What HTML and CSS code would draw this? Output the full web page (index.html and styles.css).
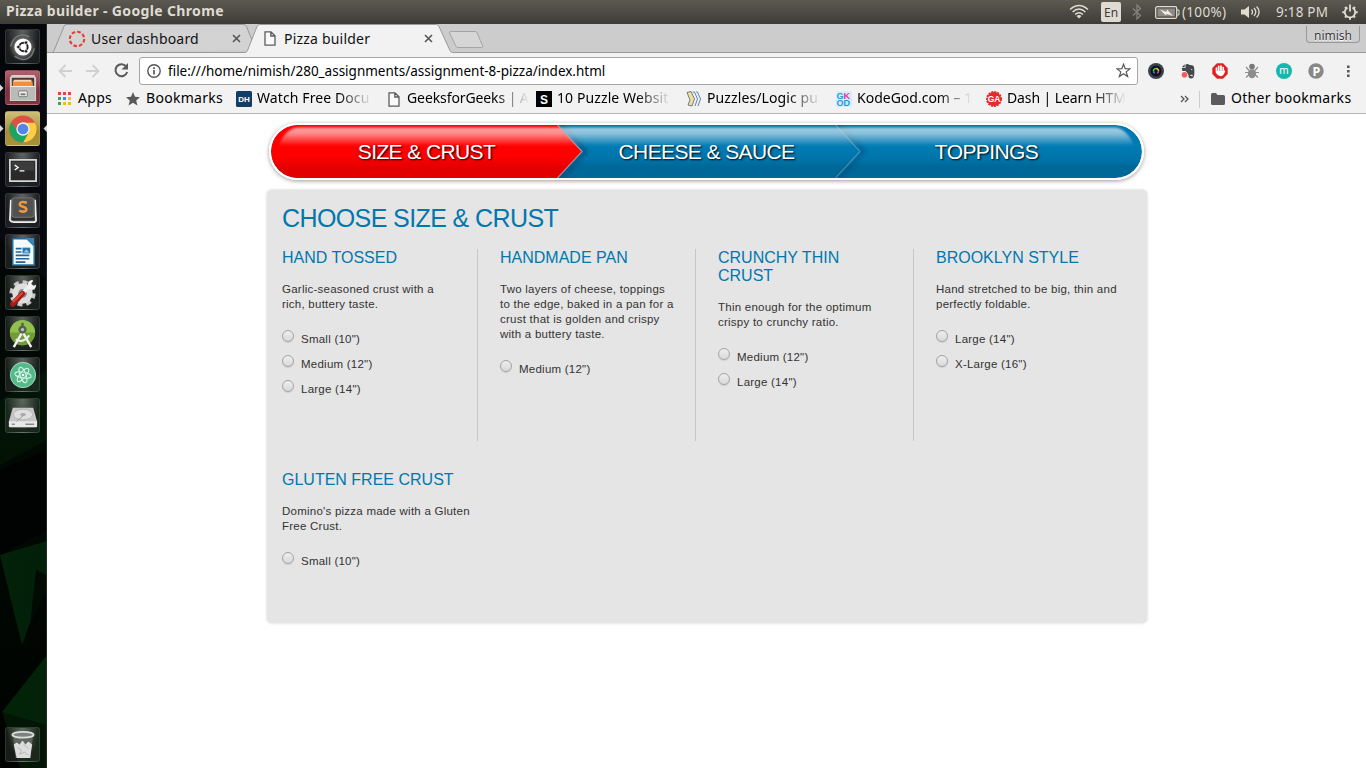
FILE: index.html
```html
<!DOCTYPE html>
<html lang="en">
<head>
<meta charset="utf-8">
<title>Pizza builder</title>
<link rel="stylesheet" href="styles.css">
</head>
<body>
<header class="menubar">
  <span class="window-title">Pizza builder - Google Chrome</span>
  <div class="indicators">
    <svg class="ind-wifi" width="20" height="16" viewBox="0 0 20 16" fill="none" stroke="#dfdbd2" stroke-width="1.4"><path d="M1 5.5Q10-2.500 19 5.500M3.600 8Q10 2 16.400 8M6 10.500Q10 6.800 14 10.500" /><path d="M7.500 12Q10 9.800 12.500 12L10 14.600z" fill="#dfdbd2" stroke="none"/></svg>
    <span class="lang">En</span>
    <svg class="ind-bt" width="10" height="16" viewBox="0 0 10 16" fill="none" stroke="#85827b" stroke-width="1.300"><path d="M1 4.500 8.500 11.500 5 15V1L8.500 4.500 1 11.500"/></svg>
    <svg class="ind-bat" width="25" height="13" viewBox="0 0 25 13"><rect x=".7" y=".7" width="21" height="11.600" rx="1.500" fill="none" stroke="#dfdbd2" stroke-width="1.300"/><rect x="2.500" y="2.500" width="17.400" height="8" fill="#8f8c85"/><path d="M22 4h2v5h-2" fill="none" stroke="#dfdbd2"/><path d="M5 3.500 11.500 6 12 3.500 18 10 11.500 7.700 11 9.500z" fill="#f3f0e8"/></svg>
    <span class="bat-text">(100%)</span>
    <svg class="ind-vol" width="21" height="16" viewBox="0 0 21 16"><path d="M1 5.500h3.500L9 2v12l-4.500-3.500H1z" fill="#dfdbd2"/><path d="M11.500 5.500q2 2.500 0 5M14 4q3.500 4 0 8M16.600 2.500q5 5.500 0 11" fill="none" stroke="#dfdbd2" stroke-width="1.300"/></svg>
    <span class="clock">9:18 PM</span>
    <svg class="ind-gear" width="16" height="16" viewBox="0 0 16 16" fill="none" stroke="#dfdbd2"><path d="M5.500 3.600A5.200 5.200 0 1 0 10.500 3.600" stroke-width="1.800"/><path d="M8 .5v7" stroke-width="1.800"/><path d="M3 3 4.500 4.500M13 3l-1.500 1.500M.3 8.300H3M13 8.300h2.700M3 13.500l1.500-1.500M13 13.500 11.500 12M8 13v2.700" stroke-width="2"/></svg>
  </div>
</header>

<div class="desktop">
<nav class="launcher">
  <svg class="wallpaper" width="47" height="744" viewBox="0 24 47 744">
    <defs><linearGradient id="wg" x2="0" y2="1"><stop offset="0" stop-color="#05060b"/><stop offset=".25" stop-color="#020606"/><stop offset=".5" stop-color="#020a05"/><stop offset="1" stop-color="#000300"/></linearGradient><linearGradient id="wf" x2="1" y2=".3"><stop offset="0" stop-color="#032208"/><stop offset="1" stop-color="#02200a"/></linearGradient></defs>
    <path d="M0 24h47v744H0z" fill="url(#wg)"/>
    <path d="M0 78 47 90V280L0 240z" fill="#0b0c16" opacity=".6"/>
    <path d="M0 400 47 370V440L0 465z" fill="#031807" opacity=".7"/><path d="M0 470 47 450V530L0 555z" fill="#000301"/>
    <path d="M0 555 47 541V574L22 645z" fill="url(#wf)"/><path d="M36 570 47 575V590L30 625z" fill="#010b03"/><path d="M2 712 47 655V745z" fill="#032309"/><path d="M2 712 20 768H47V725z" fill="#031605"/>
    <path d="M46.500 24V768" stroke="#283329" opacity=".8"/>
    <path d="M0 84.500l3.500 3.500L0 91.500zM0 125l3.500 3.500L0 132zM47 125l-3.500 3.500L47 132z" fill="#d8d8d8"/>
  </svg>
  <div class="tile"><svg viewBox="0 0 34 34"><defs><radialGradient id="glow"><stop offset=".4" stop-color="#8a8a8a"/><stop offset="1" stop-color="#444" stop-opacity="0"/></radialGradient></defs><circle cx="17" cy="18" r="15" fill="url(#glow)"/><path d="M5 17C7 5 17 3 24 7M29 19C27 31 17 33 9 27" fill="none" stroke="#777" stroke-width="1.500"/><circle cx="17.500" cy="17.500" r="8.800" fill="#fff"/><circle cx="18" cy="17.500" r="4.300" fill="none" stroke="#222" stroke-width="2"/><g fill="#222" stroke="#fff" stroke-width=".7"><circle cx="12.700" cy="17.500" r="1.800"/><circle cx="20.600" cy="13" r="1.800"/><circle cx="20.600" cy="22" r="1.800"/></g></svg></div>
  <div class="tile files"><svg viewBox="0 0 34 34"><path d="M6 4h23l2 3v24H4V7z" fill="#d4d2ce"/><path d="M6 7h23v9H6z" fill="#4b3530"/><path d="M7 10h20l1 6H7z" fill="#ee8f46"/><path d="M8 9h18v2H8z" fill="#f4d5b4"/><path d="M5 16h25v14H5z" fill="#bcbab6"/><path d="M5 16h25" stroke="#f4f4f4"/><rect x="13" y="20.500" width="9" height="6" rx="1.500" fill="#efefef" stroke="#777"/><path d="M15 24h5" stroke="#777" stroke-width="2"/></svg></div>
  <div class="tile chrome"><svg viewBox="0 0 34 34"><circle cx="17.500" cy="17.500" r="14" fill="#dd5144"/><path d="M17.500 11h12.400A14 14 0 0 1 17.500 31.500l5.800-10.500z" fill="#ffcd42"/><path d="M5.400 10.500A14 14 0 0 0 17.500 31.500l5-8.500-9-1z" fill="#1da462"/><circle cx="17.500" cy="17.500" r="6.900" fill="#f2f2f2"/><circle cx="17.500" cy="17.500" r="5.500" fill="#5287e8"/></svg></div>
  <div class="tile"><svg viewBox="0 0 34 34"><path d="M4 7h27v22H4z" fill="#292929" stroke="#d5d5d5" stroke-width="1.800"/><path d="M6 9h23v9H6z" fill="#3c3c3c"/><path d="M9 12.500 12.500 15 9 17.500M14 18.500h5" fill="none" stroke="#fff" stroke-width="1.300"/></svg></div>
  <div class="tile"><svg viewBox="0 0 34 34"><path d="M5 6 4 27q1 2 4 2h20q3 0 3-2L30 6" fill="#555" stroke="#eee" stroke-width="1.800"/><path d="M6 24h23v3H6z" fill="#2d2d2d"/><rect x="6" y="4" width="23" height="20" rx="3" fill="#515151" stroke="#777"/><path d="M21.500 9q-7-2-7.300 1.500c0 3.300 7 2 6.800 5.500-.2 2.800-4.700 2.600-7.400 1" fill="none" stroke="#ef993c" stroke-width="2.600"/></svg></div>
  <div class="tile"><svg viewBox="0 0 34 34"><path d="M7 4h15l7 7v20H7z" fill="#f6f9fb" stroke="#2371a4" stroke-width="1.500"/><path d="M20 3h9v9z" fill="#3c82b4"/><path d="M10 14h6M10 17.500h6M10 21h14M10 24.500h14M10 28h10" stroke="#1f679b" stroke-width="1.700"/><path d="M17 13h8v6h-8z" fill="#2a77ad"/><path d="m18 18 3-3 3 3" fill="#9cd"/></svg></div>
  <div class="tile"><svg viewBox="0 0 34 34"><circle cx="17" cy="18" r="11.500" fill="none" stroke="#c9c9c9" stroke-width="4" stroke-dasharray="5 4"/><circle cx="17" cy="18" r="10.500" fill="#dedede"/><circle cx="17" cy="18" r="4.500" fill="#888"/><path d="M17 18 25 9" stroke="#eee" stroke-width="4"/><path d="M23 6q4-3 5-1l-2 3 2 2 3-1q0 5-5 5t-3-8" fill="#f1f1f1"/><path d="M17 18 7 29" stroke="#9f211b" stroke-width="5.500" stroke-linecap="round"/><path d="M17 17 7 27" stroke="#dd453b" stroke-width="2.500"/></svg></div>
  <div class="tile"><svg viewBox="0 0 34 34"><circle cx="17" cy="16" r="13" fill="#8fc14b"/><path d="M4 16a13 13 0 0 0 26 0z" fill="#719c38"/><circle cx="17" cy="13" r="3" fill="#bdc6b5" stroke="#59605a" stroke-width="2.500"/><path d="M16 17 8 31M18 17l8 14" stroke="#f1f1f1" stroke-width="2.500"/><path d="M10 23q7 5 14-4" fill="none" stroke="#eee" stroke-width="2"/><path d="M17 6v4" stroke="#59605a" stroke-width="2.500"/></svg></div>
  <div class="tile"><svg viewBox="0 0 34 34"><circle cx="17.500" cy="17.500" r="13" fill="#55b889" stroke="#a0dec0"/><g fill="none" stroke="#d8f5e8" stroke-width="1"><ellipse cx="17.500" cy="17.500" rx="8.500" ry="3" transform="rotate(10 17.500 17.500)"/><ellipse cx="17.500" cy="17.500" rx="8.500" ry="3" transform="rotate(70 17.500 17.500)"/><ellipse cx="17.500" cy="17.500" rx="8.500" ry="3" transform="rotate(130 17.500 17.500)"/></g><circle cx="17.500" cy="17.500" r="1.300" fill="#fff"/></svg></div>
  <div class="tile"><svg viewBox="0 0 34 34"><path d="M7 9h21l4 14v4q0 2-2 2H5q-2 0-2-2v-4z" fill="#c6c6c6"/><path d="M3 23h29v6H3z" fill="#e8e8e8"/><ellipse cx="17.500" cy="16" rx="10" ry="5.500" fill="#dedede" stroke="#b5b5b5"/><ellipse cx="17.500" cy="16" rx="3" ry="1.600" fill="#aaa"/><path d="M6 26h3M20 26h9" stroke="#888" stroke-width="1.500"/><path d="M18 17 11 23" stroke="#999"/></svg></div>
  <div class="tile trash"><svg viewBox="0 0 34 34"><path d="M7 7 10 31h15L28 7z" fill="#6c756d" opacity=".7"/><path d="m8 17 3-2 3 2 3-4 3 4 3-3 4 3-1 6-1 8H11z" fill="#dcdcdc"/><path d="m12 20 4 3-2 4 5-2 4 3M18 17l5 4" fill="none" stroke="#b5b5b5"/><ellipse cx="17.500" cy="7" rx="11" ry="3" fill="#7a837c" stroke="#ddd" stroke-width="1.800"/></svg></div>
</nav>

<main class="browser">
  <div class="tabstrip">
    <svg class="tab-shapes" width="1319" height="29" viewBox="0 0 1319 29">
      <path d="M0 28.500H5q1 0 2-2L17 2.500q.8-2 2-2H197q1.500 0 2.500 2L209 26" fill="#d3d3d3" stroke="#989898"/>
      <path d="M0 28.500H198q1.500 0 2.500-2L210 2.500q1-2 2.500-2H389.500q1.500 0 2.500 2l11 24q1 2 2.500 2H1319V30H0z" fill="#f2f2f2"/>
      <path d="M0 28.500H198q1.500 0 2.500-2L210 2.500q1-2 2.500-2H389.500q1.500 0 2.500 2l11 24q1 2 2.500 2H1319" fill="none" stroke="#999"/>
      <path d="M404 7.500h24q1.500 0 2 1.200l5.500 13q.7 1.800-1 1.800H411q-1.500 0-2.200-1.500L402.500 9q-.5-1.500 1.500-1.500z" fill="#d6d6d6" stroke="#a5a5a5"/>
    </svg>
    <div class="tab tab-one"><svg width="18" height="18" viewBox="0 0 18 18"><circle cx="9" cy="9" r="7.200" fill="none" stroke="#e53e35" stroke-width="2.100" stroke-dasharray="3.600 2.050"/></svg><span>User dashboard</span><svg class="close" width="9" height="9" viewBox="0 0 9 9"><path d="m1 1 7 7M8 1 1 8" stroke="#565656" stroke-width="1.600"/></svg></div>
    <div class="tab tab-two"><svg width="12" height="15" viewBox="0 0 12 15"><path d="M1 .8h6l4 4v9.400H1zM6.800 1v4H11" fill="#fafafa" stroke="#5c5c5c" stroke-width="1.300"/></svg><span>Pizza builder</span><svg class="close" width="9" height="9" viewBox="0 0 9 9"><path d="m1 1 7 7M8 1 1 8" stroke="#565656" stroke-width="1.600"/></svg></div>
    <span class="profile">nimish</span>
  </div>

  <div class="toolbar">
    <svg class="arrow" width="14" height="14" viewBox="0 0 14 14" fill="none" stroke="#d0d0d0" stroke-width="1.800"><path d="M14 7H1.500M7.500 1 1.500 7l6 6"/></svg>
    <svg class="arrow" width="14" height="14" viewBox="0 0 14 14" fill="none" stroke="#d0d0d0" stroke-width="1.800"><path d="M0 7h12.500M6.500 1l6 6-6 6"/></svg>
    <svg class="reload" width="15" height="15" viewBox="0 0 15 15"><path d="M12.200 3.400A6 6 0 1 0 13.200 9" fill="none" stroke="#5a5a5a" stroke-width="2"/><path d="M14 0v6.500H7.500z" fill="#5a5a5a"/></svg>
    <div class="omnibox">
      <svg width="14" height="14" viewBox="0 0 14 14"><circle cx="7" cy="7" r="6.200" fill="none" stroke="#555" stroke-width="1.400"/><path d="M7 6v4.500M7 3.300v1.600" stroke="#555" stroke-width="1.700"/></svg>
      <span class="url">file:///home/nimish/280_assignments/assignment-8-pizza/index.html</span>
      <svg class="star" width="15" height="15" viewBox="0 0 15 15"><path d="m7.500 1.300 1.700 4.400 4.800.2-3.800 3 1.400 4.600-4.100-2.700-4.100 2.700 1.400-4.600-3.800-3 4.800-.2z" fill="none" stroke="#555" stroke-width="1.200"/></svg>
    </div>
    <div class="extensions">
      <svg viewBox="0 0 16 16"><circle cx="8" cy="8" r="8" fill="#3e434b"/><circle cx="8" cy="8" r="5.500" fill="#10131a"/><path d="M5.500 8A2.500 2.500 0 0 1 8 5.500" stroke="#37c94e" stroke-width="1.600" fill="none"/><path d="M8 5.500A2.500 2.500 0 0 1 10.500 8" stroke="#d9cf2a" stroke-width="1.600" fill="none"/><path d="M10.500 8A2.500 2.500 0 0 1 9 10.300" stroke="#d93bb5" stroke-width="1.600" fill="none"/><path d="M6.700 10.200A2.500 2.500 0 0 1 5.500 8" stroke="#2b7fe0" stroke-width="1.600" fill="none"/></svg>
      <svg viewBox="0 0 16 16"><path d="M5.500 1.500Q8 .5 9.500 2q4-.3 4.500 2 .7 4 .2 8-.4 3.500-3.200 3.500-3 0-2.500-3.500L7 9.500 5.500 8H2.500Q1.500 6.500 2 5h3.500z" fill="#45494c"/><path d="M1.800 4.200 4.700 1.300v2.900z" fill="#45494c"/><path d="M10.300 12.500q2-.8 2 .8M11.200 6.500h1" stroke="#eee" stroke-width="1.200" fill="none"/><circle cx="4.500" cy="11.700" r="2.800" fill="#f45b5b"/></svg>
      <svg viewBox="0 0 16 16"><path d="M5 .3h6L15.700 5v6L11 15.700H5L.3 11V5z" fill="#e02322"/><path d="M4.500 9V5M6.700 8V3.300M9 8V3M11.200 9V4.500" stroke="#fff" stroke-width="1.700" stroke-linecap="round"/><path d="M4 8h8l1-1q.8 1-1 4-1 2.300-3.500 2.300T4 10z" fill="#fff"/></svg>
      <svg viewBox="0 0 16 16"><path d="M2 4 5 7.500M14 4 11 7.500M1 9.500h14M2 14.500 5 11.500M14 14.500 11 11.500" stroke="#8d8d8d" stroke-width="1.200"/><ellipse cx="8" cy="10.500" rx="4" ry="4.800" fill="#8d8d8d"/><path d="M4.500 6h7" stroke="#ccc"/><circle cx="8" cy="3.500" r="2.800" fill="#777"/></svg>
      <svg viewBox="0 0 16 16"><circle cx="8" cy="8" r="8" fill="#14b8ae"/><text x="8" y="11" text-anchor="middle" class="ext-m">m</text></svg>
      <svg viewBox="0 0 16 16"><circle cx="8" cy="8" r="7.700" fill="#888"/><text x="8.500" y="12.500" text-anchor="middle" class="ext-p">P</text></svg>
      <svg viewBox="0 0 16 16"><path d="M7 2.500h2.600V5H7zM7 7h2.600v2.500H7zM7 11.500h2.600V14H7z" fill="#595959"/></svg>
    </div>
  </div>

  <div class="bookmarks">
    <div class="bm b-apps"><svg width="14" height="14" viewBox="0 0 14 14"><path d="M0 0h3v3H0zM5 0h3v3H5zM10 0h3v3h-3z" fill="#ea4335"/><path d="M0 5h3v3H0zM0 10h3v3H0z" fill="#34a853"/><path d="M5 5h3v3H5z" fill="#4285f4"/><path d="M10 5h3v3h-3zM5 10h3v3H5zM10 10h3v3h-3z" fill="#fbbc05"/></svg><span>Apps</span></div>
    <div class="bm b-star"><svg width="14" height="14" viewBox="0 0 14 14"><path d="m7 0 2 4.800 5 .4-3.800 3.300 1.200 5L7 10.800 2.600 13.500l1.200-5L0 5.200l5-.4z" fill="#595959"/></svg><span>Bookmarks</span></div>
    <div class="bm b-watch"><svg width="16" height="16" viewBox="0 0 16 16"><rect width="16" height="16" rx="1.500" fill="#123d66"/><text x="8" y="11" text-anchor="middle" class="ico-dh">DH</text></svg><span class="fade">Watch Free Docu</span></div>
    <div class="bm b-geeks"><svg width="12" height="15" viewBox="0 0 12 15"><path d="M1 .8h6l4 4v9.400H1zM6.800 1v4H11" fill="#fafafa" stroke="#5c5c5c" stroke-width="1.300"/></svg><span class="fade">GeeksforGeeks | A</span></div>
    <div class="bm b-ten"><svg width="16" height="16" viewBox="0 0 16 16"><path d="M0 0h16v16H0z"/><text x="8" y="12.500" text-anchor="middle" class="ico-s">S</text></svg><span class="fade">10 Puzzle Websit</span></div>
    <div class="bm b-puz"><svg width="16" height="16" viewBox="0 0 16 16"><path d="m1 1.500 4-1L8.500 8 6 15l-4-1 2-5z" fill="#efe0a2" stroke="#54606b" stroke-width=".8"/><path d="M6.500 1h2l3 7-2.500 7M10 1h1.500l3 7-2.500 7" fill="none" stroke="#5b86b5"/></svg><span class="fade">Puzzles/Logic pu</span></div>
    <div class="bm b-kode"><svg width="16" height="16" viewBox="0 0 16 16"><rect width="16" height="16" rx="2" fill="#d6edf7"/><text x=".5" y="7.500" class="ico-k">G<tspan fill="#e33594">K</tspan></text><text x=".5" y="15" class="ico-k">OD</text></svg><span class="fade">KodeGod.com – 1</span></div>
    <div class="bm b-dash"><svg width="16" height="16" viewBox="0 0 16 16"><circle cx="8" cy="8" r="7" fill="#e32b2b" stroke="#e32b2b" stroke-width="2" stroke-dasharray="2 1"/><text x="8" y="11.300" text-anchor="middle" class="ico-ga">GA</text></svg><span class="fade">Dash | Learn HTM</span></div>
    <svg class="more" width="9" height="8" viewBox="0 0 9 8"><path d="m1 1 3 3-3 3M5 1l3 3-3 3" fill="none" stroke="#555" stroke-width="1.300"/></svg>
    <div class="bm b-other"><svg width="14" height="12" viewBox="0 0 14 12"><path d="M1.500 0H5l1.500 2H12.500Q14 2 14 3.500v7q0 1.500-1.500 1.500h-11Q0 12 0 10.500v-9Q0 0 1.500 0z" fill="#5b5b5b"/></svg><span>Other bookmarks</span></div>
  </div>

  <section class="page">
    <div class="steps">
      <svg class="steps-art" width="871" height="53" viewBox="0 0 871 53">
        <defs>
          <linearGradient id="blue" x2="0" y2="1"><stop offset="0" stop-color="#0076b0"/><stop offset=".4" stop-color="#007bb4"/><stop offset=".65" stop-color="#0074aa"/><stop offset=".8" stop-color="#006797"/><stop offset="1" stop-color="#00699b"/></linearGradient>
          <linearGradient id="red" x2="0" y2="1"><stop offset="0" stop-color="#f00"/><stop offset=".6" stop-color="#f00"/><stop offset=".82" stop-color="#e20000"/><stop offset="1" stop-color="#e40000"/></linearGradient>
          <linearGradient id="gloss" x2="0" y2="1"><stop offset="0" stop-color="#fff" stop-opacity=".62"/><stop offset=".3" stop-color="#fff" stop-opacity=".56"/><stop offset="1" stop-color="#fff" stop-opacity="0"/></linearGradient>
          <filter id="soft" x="-50%" y="-50%" width="200%" height="200%"><feGaussianBlur stdDeviation="2"/></filter>
          <filter id="soft1" x="-5%" y="-25%" width="110%" height="150%"><feGaussianBlur stdDeviation="1"/></filter>
        </defs>
        <path d="M0 0h871v53H0z" fill="url(#blue)"/>
        <path d="M566-2 593 26.500 566 55" fill="none" stroke="#00395c" stroke-width="3" opacity=".4" filter="url(#soft)"/>
        <path d="M288-2 315 26.500 288 55" fill="none" stroke="#00395c" stroke-width="3" opacity=".6" filter="url(#soft)"/>
        <path d="M0 0h286.500L311 26.500 286.500 53H0z" fill="url(#red)"/>
        <path d="M26 2.500H845Q857 5 863 21H8Q13 5 26 2.500z" fill="url(#gloss)" filter="url(#soft1)"/>
        <path d="M286.500 0 311 26.500 286.500 53" fill="none" stroke="#c2a5ae" stroke-opacity=".75" stroke-width="1.200"/>
        <path d="M564.500 0 589 26.500 564.500 53" fill="none" stroke="#b9d7e5" stroke-opacity=".35" stroke-width="1.200"/>
      </svg>
      <span>SIZE &amp; CRUST</span><span>CHEESE &amp; SAUCE</span><span>TOPPINGS</span>
    </div>
    <div class="panel">
      <h1>CHOOSE SIZE &amp; CRUST</h1>
      <div class="crusts">
        <article><h2>HAND TOSSED</h2><p>Garlic-seasoned crust with a<br>rich, buttery taste.</p><label><i></i>Small (10")</label><label><i></i>Medium (12")</label><label><i></i>Large (14")</label></article>
        <article><h2>HANDMADE PAN</h2><p>Two layers of cheese, toppings<br>to the edge, baked in a pan for a<br>crust that is golden and crispy<br>with a buttery taste.</p><label><i></i>Medium (12")</label></article>
        <article><h2>CRUNCHY THIN<br>CRUST</h2><p>Thin enough for the optimum<br>crispy to crunchy ratio.</p><label><i></i>Medium (12")</label><label><i></i>Large (14")</label></article>
        <article class="last"><h2>BROOKLYN STYLE</h2><p>Hand stretched to be big, thin and<br>perfectly foldable.</p><label><i></i>Large (14")</label><label><i></i>X-Large (16")</label></article>
        <article class="last"><h2>GLUTEN FREE CRUST</h2><p>Domino's pizza made with a Gluten<br>Free Crust.</p><label><i></i>Small (10")</label></article>
      </div>
    </div>
  </section>
</main>
</div>
</body>
</html>
```

FILE: styles.css
```css
* { box-sizing: border-box; }
body { margin: 0; width: 1366px; height: 768px; overflow: hidden; background: #fff; font-family: "Noto Sans", sans-serif; font-size: 14px; color: #111; white-space: nowrap; }
svg { display: block; flex: none; }

.menubar { height: 24px; display: flex; align-items: center; padding-left: 6px; background: linear-gradient(#5c5950, #3d3c38); color: #dfdbd2; }
.window-title { font-weight: 700; font-size: 14px; line-height: 20px; letter-spacing: .35px; padding-bottom: 2px; }
.indicators { margin-left: auto; display: flex; align-items: center; width: 297px; }
.lang { width: 20px; height: 20px; margin-left: 12px; border-radius: 2px; background: #dfdbd2; color: #3d3c38; font-size: 12px; line-height: 21px; text-align: center; }
.ind-bt { margin-left: 11px; }
.ind-bat { margin-left: 13px; }
.bat-text { width: 47px; margin-left: 2px; font-size: 13.500px; letter-spacing: .3px; }
.ind-vol { margin-left: 11px; }
.clock { width: 54px; margin-left: 15px; font-size: 13.500px; letter-spacing: .2px; }
.ind-gear { margin-left: 12px; }

.desktop { display: flex; height: 744px; }
.launcher { position: relative; flex: none; width: 47px; height: 744px; padding: 5px 0 6px 5px; display: flex; flex-direction: column; gap: 6px; background: #030603; }
.wallpaper { position: absolute; left: 0; top: 0; }
.tile { position: relative; flex: none; width: 35px; height: 35px; border-radius: 3px; border: 1px solid rgba(255,255,255,.1); background: radial-gradient(ellipse at 50% 0, rgba(170,175,170,.55), rgba(80,85,80,.3) 70%); }
.tile svg { width: 33px; height: 33px; }
.files { background: linear-gradient(#b0636d, #7f2e3c 60%, #803542); }
.chrome { background: linear-gradient(#cfc079, #a28e35 60%, #a7923c); }
.trash { margin-top: auto; }

.browser { flex: 1; min-width: 0; }
.tabstrip { position: relative; height: 29px; background: #ccc; display: flex; align-items: center; }
.tab-shapes { position: absolute; left: 0; top: 0; }
.tab { position: relative; display: flex; align-items: center; height: 29px; letter-spacing: .2px; }
.tab-one { margin-left: 21px; width: 196px; }
.tab-one span { margin-left: 5px; }
.tab-one .close { margin-right: 23px; }
.tab-two { width: 169px; }
.tab-two span { margin-left: 8px; }
.close { margin-left: auto; }
.profile { position: relative; align-self: flex-start; width: 54px; height: 17px; margin: 2px 6px 0 auto; border: 1px solid #999; border-top: 0; border-radius: 0 0 4px 4px; text-align: center; font-size: 12px; line-height: 19px; color: #333; text-shadow: 0 0 1px #fff, 0 1px 0 #fff; }

.toolbar { height: 35px; background: #f2f2f2; display: flex; align-items: center; padding-left: 11px; }
.arrow + .arrow { margin-left: 14px; }
.reload { margin-left: 14px; }
.omnibox { width: 999px; height: 28px; margin-left: 10px; border: 1px solid #a6a6a6; border-radius: 3px; background: #fff; display: flex; align-items: center; padding: 0 6px 0 7px; }
.url { margin-left: 7px; font-size: 13.500px; color: #000; }
.star { margin-left: auto; }
.extensions { display: flex; gap: 16px; margin-left: 10px; }
.extensions svg { width: 16px; height: 16px; }
.ext-m { font: 10px "Noto Sans", sans-serif; fill: #fff; }
.ext-p { font: 700 12.500px "Noto Sans", sans-serif; fill: #fff; }

.bookmarks { height: 26px; background: #f2f2f2; border-bottom: 1px solid #b6b6b6; display: flex; align-items: center; padding: 0 0 3px 11px; color: #000; }
.bm { flex: none; display: flex; align-items: center; height: 22px; letter-spacing: .3px; }
.bm span { margin-left: 6px; flex: 1; line-height: 20px; padding-bottom: 2px; }
.fade { -webkit-mask-image: linear-gradient(90deg, #000 calc(100% - 34px), transparent); mask-image: linear-gradient(90deg, #000 calc(100% - 34px), transparent); }
.b-apps { width: 68px; }
.b-star { width: 110px; }
.bm.b-watch { width: 152px; }
.b-watch span, .b-ten span, .b-puz span, .b-kode span, .b-dash span { margin-left: 5px; }
.b-watch span { margin-right: 16px; letter-spacing: .1px; }
.b-geeks { width: 148px; }
.b-geeks span { margin-left: 7px; margin-right: 9px; letter-spacing: -.1px; }
.b-ten { width: 150px; }
.b-ten span { margin-right: 15px; letter-spacing: .1px; }
.b-puz { width: 150px; }
.b-puz span { margin-right: 15px; letter-spacing: .1px; }
.b-kode { width: 150px; }
.b-kode span { margin-right: 15px; letter-spacing: 0; }
.b-dash { width: 150px; }
.b-dash span { margin-right: 11px; letter-spacing: -.1px; }
.more { margin: 0 10px 0 44px; }
.b-other { height: 17px; padding-left: 11px; border-left: 1px solid #ccc; }
.ico-dh { font: 700 8px "Liberation Sans", sans-serif; letter-spacing: 0; fill: #fff; }
.ico-s { font: 700 12px "Liberation Sans", sans-serif; letter-spacing: 0; fill: #fff; }
.ico-k { font: 700 9px "Liberation Sans", sans-serif; letter-spacing: 0; fill: #259bd3; }
.ico-ga { font: 700 8.500px "Liberation Sans", sans-serif; letter-spacing: 0; fill: #fff; }

.page { font-family: "Liberation Sans", Arial, sans-serif; padding: 9px 0 0 220px; height: 654px; background: #fff; }
.steps { position: relative; width: 875px; height: 57px; margin-left: 2px; padding: 0 15px; border: 2px solid #fff; border-radius: 29px; box-shadow: 0 1px 4px rgba(0,0,0,.4); display: flex; overflow: hidden; }
.steps-art { position: absolute; left: 0; top: 0; border-radius: 27px; }
.steps span { position: relative; width: 280px; padding-left: 1px; text-align: center; font-size: 21px; letter-spacing: -.6px; line-height: 54px; color: #fff; text-shadow: 1px 1px 2px #000; }
.panel { width: 880px; height: 433px; margin-top: 10px; padding: 15px; border-radius: 5px; background: #e5e5e5; box-shadow: 0 0 3px rgba(0,0,0,.2); }
h1 { margin: 0; font-size: 25px; letter-spacing: -.6px; line-height: 27px; font-weight: 400; color: #0078ae; }
.crusts { display: grid; grid-template-columns: repeat(4, 218px); gap: 30px 0; margin-top: 17px; }
article { width: 196px; height: 192px; border-right: 1px solid #c6c6c6; font-size: 11.500px; letter-spacing: .24px; line-height: 15px; color: #333; }
article.last { border: 0; }
h2 { margin: 0; font-size: 16px; letter-spacing: 0; line-height: 18px; font-weight: 400; color: #0078ae; }
p { margin: 15px 0 12px; }
label { display: flex; align-items: center; height: 25px; padding-top: 5px; }
i { width: 12px; height: 12px; margin: -6px 7px 0 0; border: 1px solid #a3a3a3; border-radius: 50%; background: linear-gradient(#eee, #d9d9d9); box-shadow: 0 1px 1px rgba(0,0,0,.1); }
```
